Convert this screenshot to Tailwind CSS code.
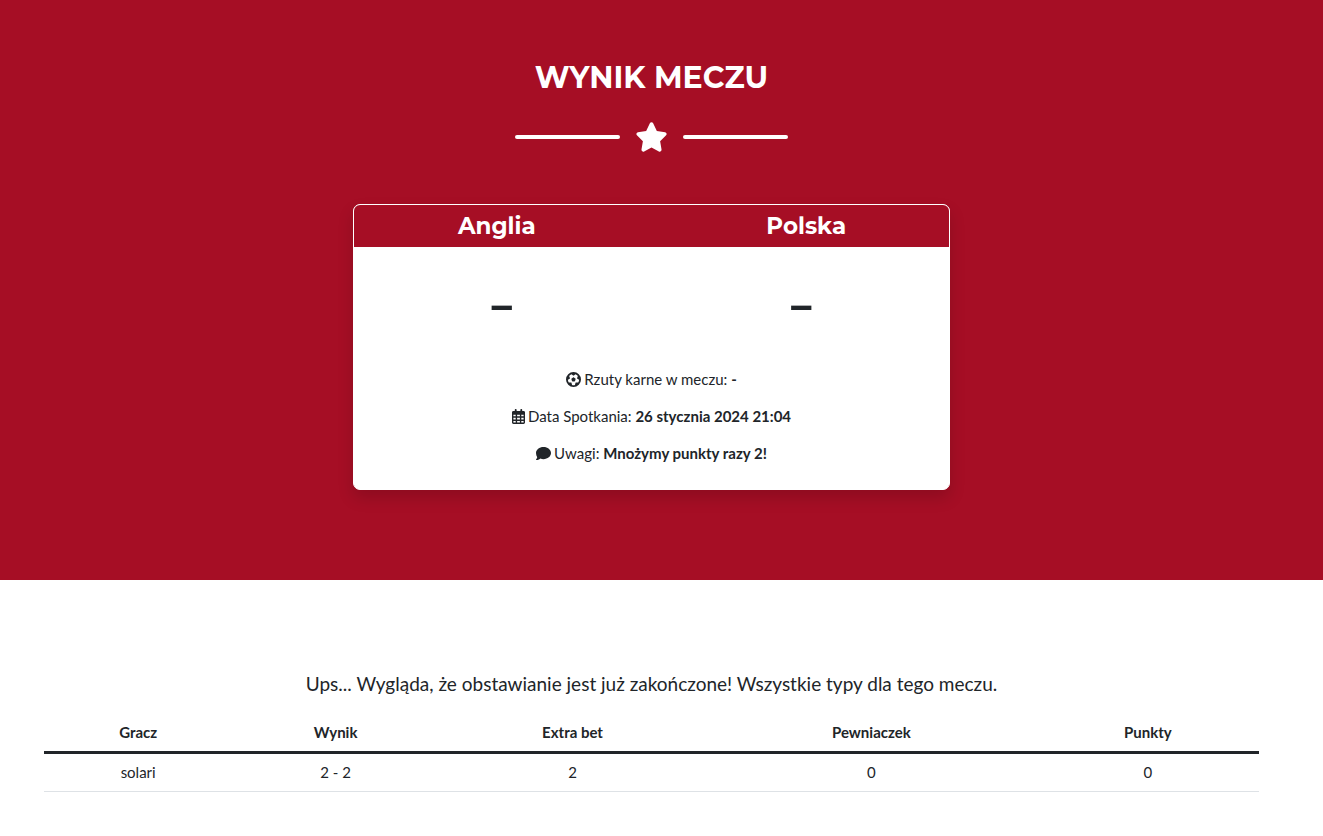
<!DOCTYPE html>
<html lang="pl">
<head>
<meta charset="utf-8">
<meta name="viewport" content="width=device-width, initial-scale=1">
<title>Wynik meczu</title>
<script src="https://cdn.jsdelivr.net/npm/@tailwindcss/browser@4"></script>
</head>
<body class="bg-white font-['Lato',sans-serif] text-[15px] leading-[22px] text-[#212529]">
<header class="bg-[#a60e25] pt-[60px] pr-5 pb-[90px]">
  <h1 class="text-center font-['Montserrat','Inter',sans-serif] text-[30px] leading-9 font-bold text-white">WYNIK MECZU</h1>
  <div class="mt-[26px] flex items-center justify-center gap-[15px] text-white">
    <span class="h-1 w-[105px] rounded-full bg-current"></span>
    <svg class="h-[30px] w-[33px]" viewBox="0 0 576 512" fill="currentColor" aria-hidden="true"><path d="M316.9 18C311.6 7 300.4 0 288.1 0s-23.4 7-28.8 18L195 150.3 51.4 171.5c-12 1.8-22 10.2-25.7 21.7s-.7 24.2 7.9 32.7L137.8 329 113.2 474.7c-2 12 3 24.2 12.9 31.3s23 8 33.8 2.3l128.3-68.5 128.3 68.5c10.8 5.7 23.9 4.9 33.8-2.3s14.9-19.3 12.9-31.3L438.5 329 542.7 225.9c8.6-8.5 11.7-21.2 7.9-32.7s-13.7-19.9-25.7-21.7L381.2 150.3 316.9 18z"/></svg>
    <span class="h-1 w-[105px] rounded-full bg-current"></span>
  </div>
  <section class="mx-auto mt-[52px] w-full max-w-[597px] overflow-hidden rounded-[7px] border border-white bg-white text-center shadow-[0_8px_16px_rgba(0,0,0,0.15)]">
    <div class="flex gap-6 bg-[#a60e25] py-2 font-['Montserrat','Inter',sans-serif] text-[23px] leading-[26px] font-bold text-white">
      <h2 class="flex-1">Anglia</h2>
      <h2 class="flex-1">Polska</h2>
    </div>
    <div class="flex gap-1 pt-7 pb-0.5 text-[50px] leading-[58px] font-bold">
      <span class="flex-1">–</span>
      <span class="flex-1">–</span>
    </div>
    <div class="flex flex-col gap-[15px] pt-[33px] pb-[25px]">
      <p class="flex items-center justify-center gap-[3px]"><svg class="size-[15px]" viewBox="0 0 512 512" fill="currentColor" aria-hidden="true"><path d="M417.3 360.1l-71.6-4.8c-5.2-.3-10.3 1.1-14.5 4.2s-7.2 7.4-8.4 12.5l-17.6 69.6C289.5 445.8 273 448 256 448s-33.5-2.2-49.2-6.4L189.2 372c-1.3-5-4.3-9.4-8.4-12.5s-9.3-4.5-14.5-4.2l-71.6 4.8c-17.6-27.2-28.5-59.2-30.4-93.6L125 228.3c4.4-2.8 7.6-7 9.2-11.9s1.4-10.2-.5-15l-26.7-66.6C128 109.2 155.3 89 186.9 76.9l55.2 46c4 3.3 9 5.1 14.1 5.1s10.2-1.8 14.1-5.1l55.2-46c31.6 12.1 58.9 32.3 79.9 57.9l-26.7 66.6c-1.9 4.8-2.1 10.1-.5 15s4.9 9.1 9.2 11.9l60.7 38.2c-1.9 34.4-12.8 66.4-30.4 93.6zM256 512A256 256 0 1 0 256 0a256 256 0 1 0 0 512zm14.1-325.7c-8.4-6.1-19.8-6.1-28.2 0L194 221c-8.4 6.1-11.9 16.9-8.7 26.8l18.3 56.3c3.2 9.9 12.4 16.6 22.8 16.6h59.2c10.4 0 19.6-6.7 22.8-16.6l18.3-56.3c3.2-9.9-.3-20.7-8.7-26.8l-47.9-34.8z"/></svg><span>Rzuty karne w meczu: <b>-</b></span></p>
      <p class="flex items-center justify-center gap-[3px]"><svg class="h-[15px] w-[13px]" viewBox="0 0 448 512" fill="currentColor" fill-rule="evenodd" aria-hidden="true"><path d="M128 0c17.7 0 32 14.3 32 32v32h128V32c0-17.7 14.3-32 32-32s32 14.3 32 32v32h48c26.5 0 48 21.5 48 48v352c0 26.5-21.5 48-48 48H48c-26.5 0-48-21.5-48-48V112c0-26.5 21.5-48 48-48h48V32c0-17.7 14.3-32 32-32zM48 192v56h80v-56zm128 0v56h96v-56zm144 0v56h80v-56zM48 296v64h80v-64zm128 0v64h96v-64zm144 0v64h80v-64zM48 408v56h80v-56zm128 0v56h96v-56zm144 0v56h80v-56z"/></svg><span>Data Spotkania: <b>26 stycznia 2024 21:04</b></span></p>
      <p class="flex items-center justify-center gap-[3px]"><svg class="size-[15px]" viewBox="0 0 512 512" fill="currentColor" aria-hidden="true"><path d="M512 240c0 114.9-114.6 208-256 208-37.1 0-72.3-6.4-104.1-17.9-11.9 8.7-31.3 20.6-54.3 30.6C73.6 471.1 44.7 480 16 480c-6.5 0-12.3-3.9-14.8-9.9s-1.1-12.8 3.4-17.4c12-12 29-36 37.5-69.5C15.6 342.6 0 293.2 0 240 0 125.1 114.6 32 256 32s256 93.1 256 208z"/></svg><span>Uwagi: <b>Mnożymy punkty razy 2!</b></span></p>
    </div>
  </section>
</header>
<main class="pt-[90px] pr-16 pb-11 pl-11 text-center">
  <h3 class="text-[19px] leading-7">Ups... Wygląda, że obstawianie jest już zakończone! Wszystkie typy dla tego meczu.</h3>
  <table class="mt-[15px] w-full table-fixed border-collapse">
    <colgroup><col class="w-[15.5%]"><col class="w-[17%]"><col class="w-[22%]"><col class="w-[27.2%]"><col class="w-[18.3%]"></colgroup>
    <thead>
      <tr class="border-b-3 border-[#212529]"><th scope="col" class="py-2">Gracz</th><th scope="col" class="py-2">Wynik</th><th scope="col" class="py-2">Extra bet</th><th scope="col" class="py-2">Pewniaczek</th><th scope="col" class="py-2">Punkty</th></tr>
    </thead>
    <tbody>
      <tr class="border-b border-[#dee2e6]"><td class="pt-[7px] pb-2">solari</td><td class="pt-[7px] pb-2">2 - 2</td><td class="pt-[7px] pb-2">2</td><td class="pt-[7px] pb-2">0</td><td class="pt-[7px] pb-2">0</td></tr>
    </tbody>
  </table>
</main>
</body>
</html>
